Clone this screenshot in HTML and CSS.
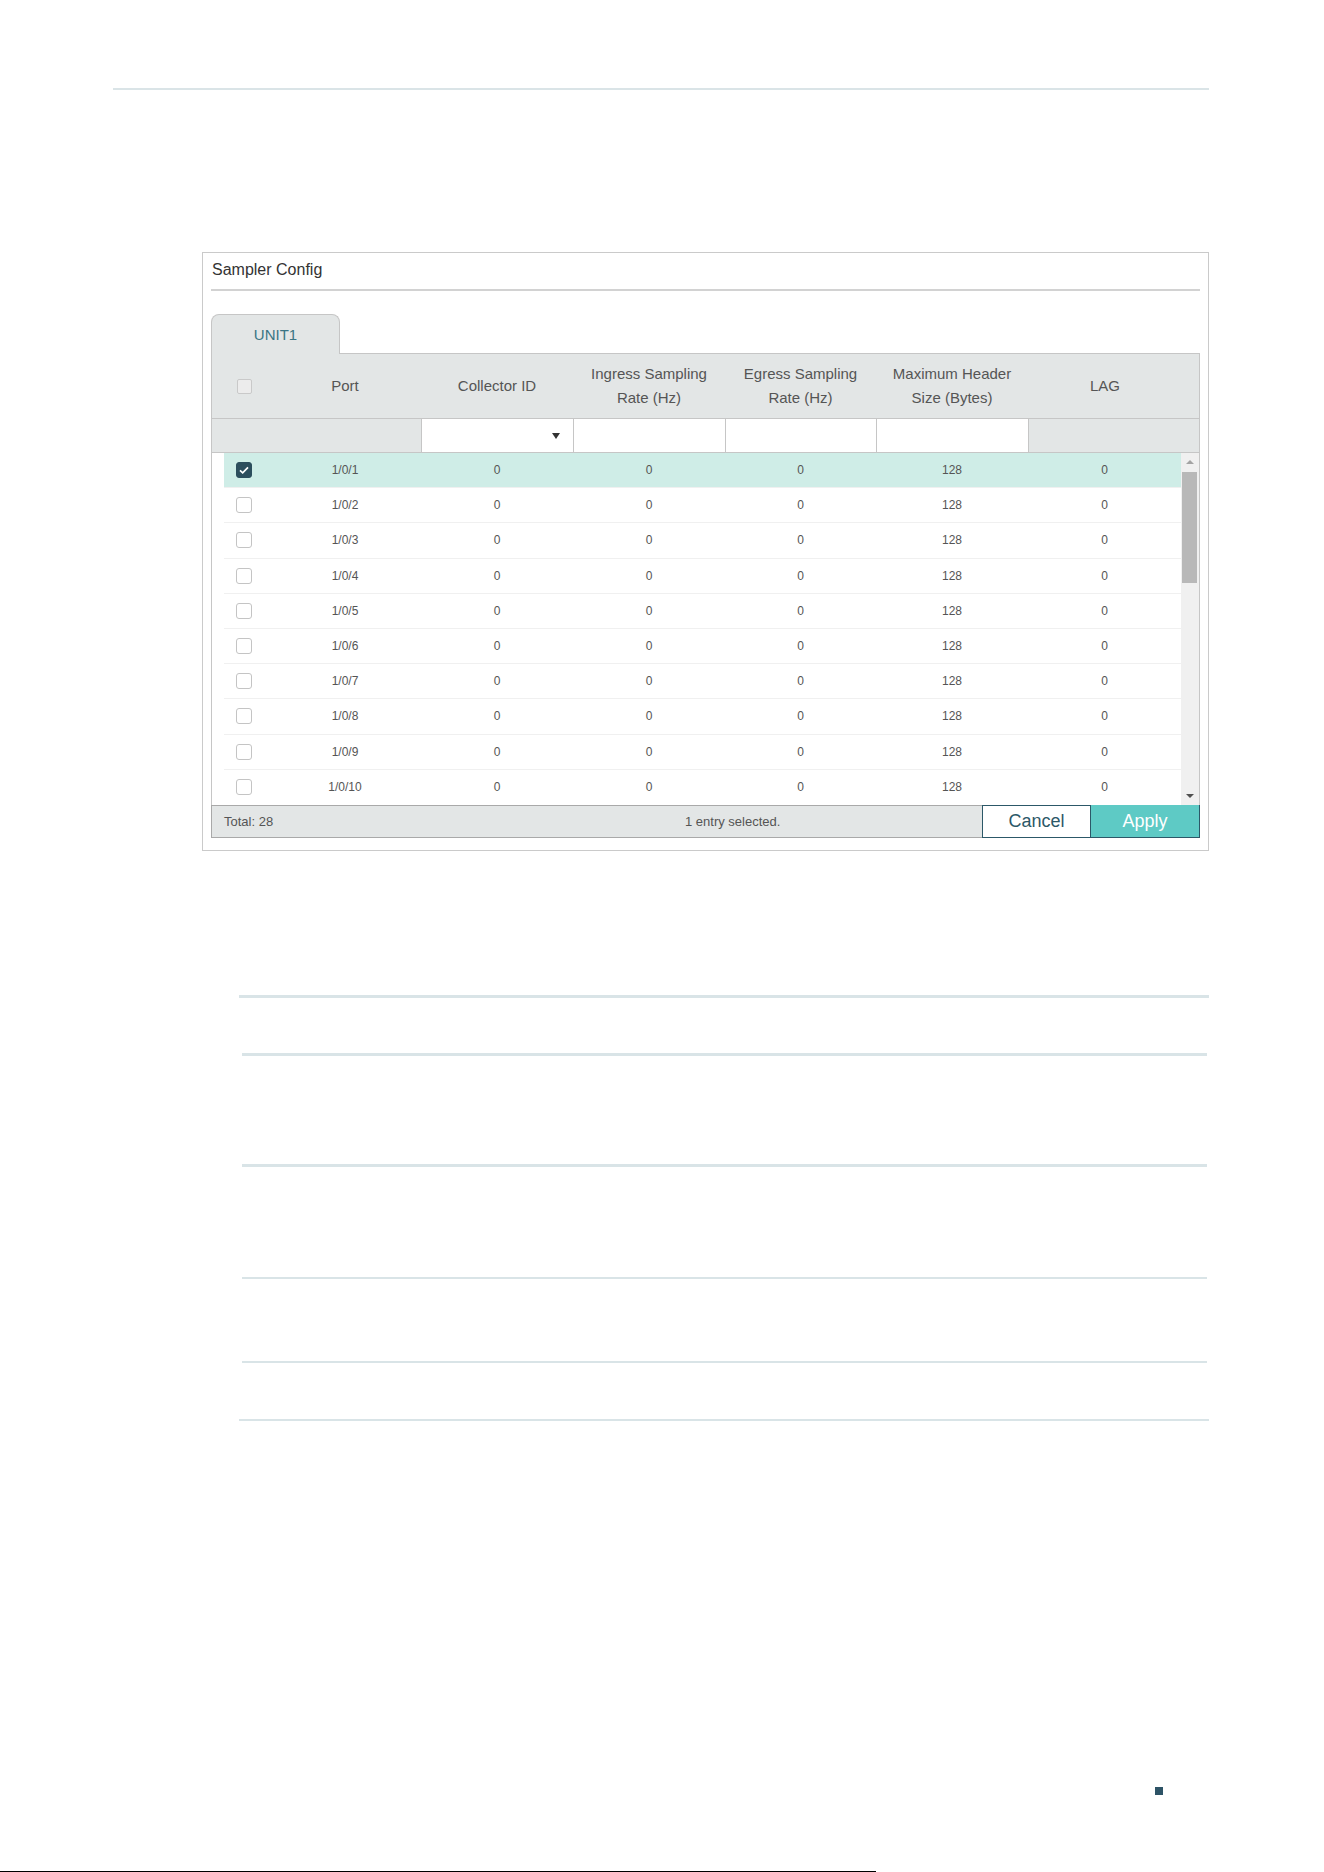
FILE: index.html
```html
<!DOCTYPE html>
<html lang="en">
<head>
    <meta charset="UTF-8">
    <meta name="viewport" content="width=device-width, initial-scale=1.0">
    <title>Sampler Config</title>
    <link rel="stylesheet" href="styles.css">
</head>
<body>

    <div class="page">
        <div class="top-rule"></div>

        <div class="panel">
            <div class="panel-title">Sampler Config</div>

            <div class="tabs">
                <div class="tab">UNIT1</div>
            </div>

            <div class="grid">
                <!-- column titles -->
                <div class="head-row">
                    <div class="cell"><span class="checkbox head-check"></span></div>
                    <div class="cell port-head">Port</div>
                    <div class="cell">Collector ID</div>
                    <div class="cell">Ingress Sampling<br>Rate (Hz)</div>
                    <div class="cell">Egress Sampling<br>Rate (Hz)</div>
                    <div class="cell">Maximum Header<br>Size (Bytes)</div>
                    <div class="cell lag-head">LAG</div>
                </div>

                <!-- batch edit inputs -->
                <div class="filter-row">
                    <div class="filter-blank"></div>
                    <div class="filter-input select"><span class="caret"></span></div>
                    <div class="filter-input"></div>
                    <div class="filter-input"></div>
                    <div class="filter-input"></div>
                    <div class="filter-blank lag"></div>
                </div>

                <div class="grid-body">
                    <div class="rows">
                        <div class="row selected">
                            <div class="cell"><span class="checkbox checked"><svg viewBox="0 0 16 16"><path d="M4 8.3l2.7 2.6L12 5.4"/></svg></span></div>
                            <div class="cell port">1/0/1</div>
                            <div class="cell">0</div><div class="cell">0</div><div class="cell">0</div><div class="cell">128</div><div class="cell">0</div>
                        </div>
                        <div class="row">
                            <div class="cell"><span class="checkbox"></span></div>
                            <div class="cell port">1/0/2</div>
                            <div class="cell">0</div><div class="cell">0</div><div class="cell">0</div><div class="cell">128</div><div class="cell">0</div>
                        </div>
                        <div class="row">
                            <div class="cell"><span class="checkbox"></span></div>
                            <div class="cell port">1/0/3</div>
                            <div class="cell">0</div><div class="cell">0</div><div class="cell">0</div><div class="cell">128</div><div class="cell">0</div>
                        </div>
                        <div class="row">
                            <div class="cell"><span class="checkbox"></span></div>
                            <div class="cell port">1/0/4</div>
                            <div class="cell">0</div><div class="cell">0</div><div class="cell">0</div><div class="cell">128</div><div class="cell">0</div>
                        </div>
                        <div class="row">
                            <div class="cell"><span class="checkbox"></span></div>
                            <div class="cell port">1/0/5</div>
                            <div class="cell">0</div><div class="cell">0</div><div class="cell">0</div><div class="cell">128</div><div class="cell">0</div>
                        </div>
                        <div class="row">
                            <div class="cell"><span class="checkbox"></span></div>
                            <div class="cell port">1/0/6</div>
                            <div class="cell">0</div><div class="cell">0</div><div class="cell">0</div><div class="cell">128</div><div class="cell">0</div>
                        </div>
                        <div class="row">
                            <div class="cell"><span class="checkbox"></span></div>
                            <div class="cell port">1/0/7</div>
                            <div class="cell">0</div><div class="cell">0</div><div class="cell">0</div><div class="cell">128</div><div class="cell">0</div>
                        </div>
                        <div class="row">
                            <div class="cell"><span class="checkbox"></span></div>
                            <div class="cell port">1/0/8</div>
                            <div class="cell">0</div><div class="cell">0</div><div class="cell">0</div><div class="cell">128</div><div class="cell">0</div>
                        </div>
                        <div class="row">
                            <div class="cell"><span class="checkbox"></span></div>
                            <div class="cell port">1/0/9</div>
                            <div class="cell">0</div><div class="cell">0</div><div class="cell">0</div><div class="cell">128</div><div class="cell">0</div>
                        </div>
                        <div class="row">
                            <div class="cell"><span class="checkbox"></span></div>
                            <div class="cell port">1/0/10</div>
                            <div class="cell">0</div><div class="cell">0</div><div class="cell">0</div><div class="cell">128</div><div class="cell">0</div>
                        </div>
                    </div>

                    <div class="scrollbar">
                        <span class="arrow up"></span>
                        <div class="track"><div class="thumb"></div></div>
                        <span class="arrow down"></span>
                    </div>
                </div>
            </div>

            <div class="grid-footer">
                <div class="total">Total: 28</div>
                <div class="selection">1 entry selected.</div>
                <button type="button" class="btn cancel">Cancel</button>
                <button type="button" class="btn apply">Apply</button>
            </div>
        </div>

        <div class="spec">
            <div class="spec-row r1"></div>
            <div class="spec-row r2"></div>
            <div class="spec-row r3"></div>
            <div class="spec-row r4"></div>
            <div class="spec-row r5"></div>
        </div>

        <div class="page-mark"></div>
        <div class="bottom-line"></div>
    </div>

</body>
</html>
```

FILE: styles.css
```css
body {
    margin: 0;
    background: #fff;
    font-family: "Liberation Sans", Arial, sans-serif;
    color: #555;
}
.page {
    width: 1324px;
    height: 1872px;
    overflow: hidden;
}
.top-rule {
    margin: 88px 0 0 113px;
    width: 1096px;
    height: 2px;
    background: #dae4e7;
}

/* Panel */
.panel {
    box-sizing: border-box;
    width: 1007px;
    margin: 162px 0 0 202px;
    padding: 0 8px 12px;
    border: 1px solid #cacaca;
}
.panel-title {
    font-size: 16px;
    line-height: 20px;
    color: #333;
    padding: 7px 1px 9px;
    border-bottom: 2px solid #d2d2d2;
}
.tabs {
    display: flex;
    margin-top: 23px;
}
.tab {
    position: relative;
    z-index: 1;
    box-sizing: border-box;
    width: 129px;
    height: 40px;
    margin-bottom: -1px;
    border: 1px solid #c6c6c6;
    border-bottom: none;
    border-radius: 8px 8px 0 0;
    background: #e3e6e6;
    color: #3a7584;
    font-size: 15px;
    line-height: 39px;
    text-align: center;
}

/* Grid */
.grid {
    box-sizing: border-box;
    width: 989px;
    border: 1px solid #c6c6c6;
    border-bottom: none;
}
.head-row,
.filter-row {
    display: grid;
    grid-template-columns: 64px 145px 152px 152px 151px 152px 171px;
    background: #e3e6e6;
}
.head-row {
    height: 64px;
    border-bottom: 1px solid #c6c6c6;
    font-size: 15px;
    line-height: 24px;
}
.cell {
    display: flex;
    align-items: center;
    justify-content: center;
    text-align: center;
}
.port-head {
    padding-right: 7px;
}
.lag-head {
    padding-right: 17px;
}
.filter-row {
    height: 33px;
    border-bottom: 1px solid #c6c6c6;
}
.filter-blank {
    grid-column: span 2;
}
.filter-blank.lag {
    grid-column: span 1;
    border-left: 1px solid #c6c6c6;
}
.filter-input {
    background: #fff;
    border-left: 1px solid #c6c6c6;
    display: flex;
    align-items: center;
    justify-content: flex-end;
}
.caret {
    margin-right: 13px;
    border-left: 4px solid transparent;
    border-right: 4px solid transparent;
    border-top: 6px solid #333;
}

.grid-body {
    display: flex;
    height: 352px;
    padding-left: 12px;
}
.rows {
    width: 957px;
    display: grid;
    grid-template-rows: repeat(10, 1fr);
}
.row {
    display: grid;
    grid-template-columns: 39px 158px 152px 152px 151px 152px 153px;
    font-size: 12px;
    border-bottom: 1px solid #f0f0f0;
}
.row:last-child {
    border-bottom: none;
}
.row.selected {
    background: #cfede7;
}
.port {
    padding-left: 6px;
}
.checkbox {
    box-sizing: border-box;
    display: block;
    width: 16px;
    height: 16px;
    border: 1px solid #c4c4c4;
    border-radius: 3px;
    background: #fff;
}
.checkbox svg {
    display: block;
    width: 16px;
    height: 16px;
    margin: -1px;
}
.checkbox svg path {
    fill: none;
    stroke: #fff;
    stroke-width: 1.7;
}
.checkbox.checked {
    background: #2c4e5d;
    border-color: #2c4e5d;
}
.head-check {
    width: 15px;
    height: 15px;
    border-color: #c9c9c9;
    background: #ececec;
    border-radius: 2px;
}

/* Scrollbar */
.scrollbar {
    width: 18px;
    background: #f0f0f0;
    display: flex;
    flex-direction: column;
    align-items: center;
}
.arrow {
    width: 0;
    height: 0;
    border-left: 4px solid transparent;
    border-right: 4px solid transparent;
}
.arrow.up {
    margin: 7px 0 6px;
    border-bottom: 4px solid #a3a3a3;
}
.arrow.down {
    margin: 6px 0 7px;
    border-top: 4px solid #505050;
}
.track {
    flex: 1;
    align-self: stretch;
    padding: 2px 2px 0 1px;
}
.thumb {
    height: 111px;
    background: #b8b8b8;
}

/* Footer */
.grid-footer {
    box-sizing: border-box;
    width: 989px;
    height: 33px;
    display: grid;
    grid-template-columns: 473px 297px 109px 109px;
    background: #e3e6e6;
    border: 1px solid #a9a9a9;
    border-right: none;
    font-size: 13px;
}
.total {
    padding-left: 12px;
    line-height: 31px;
}
.selection {
    line-height: 31px;
}
.btn {
    margin: -1px 0;
    font-family: "Liberation Sans", Arial, sans-serif;
    font-size: 18px;
    padding: 0;
    cursor: pointer;
}
.cancel {
    background: #fff;
    color: #2c5868;
    border: 1px solid #2c5868;
}
.apply {
    background: #5ecac5;
    color: #fff;
    border: none;
    border-bottom: 1px solid #2c5868;
    border-right: 1px solid #2c5868;
}

/* Document table rules */
.spec {
    width: 970px;
    margin: 144px 0 0 239px;
    border-top: 3px solid #d9e4e7;
    border-bottom: 2px solid #d9e4e7;
}
.spec-row {
    margin: 0 2px 0 3px;
    border-bottom: 3px solid #d9e4e7;
}
.spec-row.r1 { height: 55px; }
.spec-row.r2 { height: 108px; }
.spec-row.r3 { height: 110px; border-bottom-width: 2px; }
.spec-row.r4 { height: 82px; border-bottom-width: 2px; }
.spec-row.r5 { height: 56px; border-bottom: none; }

.page-mark {
    width: 8px;
    height: 8px;
    margin: 366px 0 0 1155px;
    background: #2d5366;
}
.bottom-line {
    width: 876px;
    height: 1px;
    margin-top: 76px;
    background: #000;
}
```
